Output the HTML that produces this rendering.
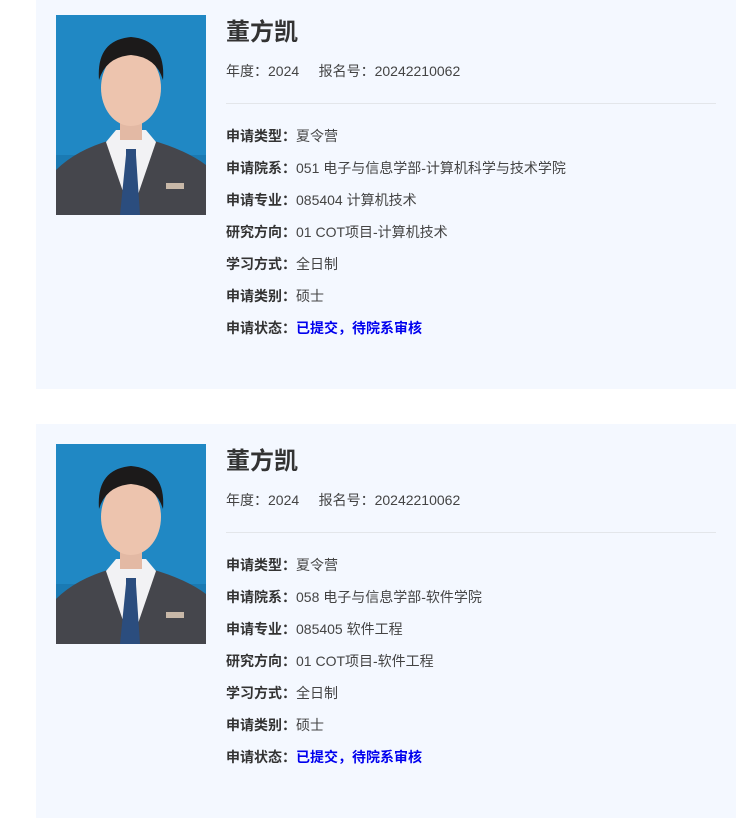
<!DOCTYPE html>
<html><head><meta charset="utf-8"><style>
*{margin:0;padding:0;box-sizing:border-box}
body{width:751px;height:818px;background:#fff;font-family:"Liberation Sans","Noto Sans CJK SC",sans-serif;color:#333;position:relative;overflow:hidden}
.card{position:absolute;left:36px;width:700px;background:#f4f8ff}
.photo{position:absolute;left:20px;top:15px;width:150px;height:200px}
.info{position:absolute;left:190px;top:1px;width:490px}
.name{position:absolute;top:17px;font-size:24px;font-weight:bold;color:#333;line-height:30px}
.meta{position:absolute;top:61px;font-size:14px;line-height:18px;color:#444}
.hr{position:absolute;top:102px;left:0;width:490px;height:1px;background:#e3e6ea}
.row{position:absolute;font-size:14px;line-height:18px;color:#444}
.row b{color:#333}
.blue{color:#0000ee;font-weight:bold}
</style></head><body>
<svg width="0" height="0" style="position:absolute"><defs>
<g id="ph">
<rect width="150" height="200" fill="#2088c4"/>
<rect y="140" width="150" height="60" fill="#1a7ab3"/>
<path d="M0 155 Q20 135 55 125 L95 125 Q130 135 150 150 L150 200 L0 200Z" fill="#45464c"/>
<path d="M50 127 L75 200 L100 127 L90 115 L60 115Z" fill="#f2f2f4"/>
<path d="M70 140 L80 140 L84 200 L64 200Z" fill="#2b4d7e"/>
<path d="M70 134 L80 134 L80 142 L70 142Z" fill="#2b4d7e"/>
<rect x="64" y="95" width="22" height="30" fill="#e3b9a4"/>
<ellipse cx="75" cy="73" rx="30" ry="38" fill="#edc4ae"/>
<path d="M43 65 Q40 25 75 22 Q110 25 107 65 Q100 42 75 40 Q50 42 43 65Z" fill="#1c1a1a"/>
<rect x="110" y="168" width="18" height="6" fill="#c8b8a8"/>
</g></defs></svg>

<div class="card" style="top:0;height:389px">
<svg class="photo" viewBox="0 0 150 200"><use href="#ph"/></svg>
<div class="info">
<div class="name">董方凯</div>
<div class="meta">年度：2024&nbsp;&nbsp;&nbsp;&nbsp;&nbsp;报名号：20242210062</div>
<div class="hr"></div>
<div class="row" style="top:126px"><b>申请类型：</b>夏令营</div>
<div class="row" style="top:158px"><b>申请院系：</b>051 电子与信息学部-计算机科学与技术学院</div>
<div class="row" style="top:190px"><b>申请专业：</b>085404 计算机技术</div>
<div class="row" style="top:222px"><b>研究方向：</b>01 COT项目-计算机技术</div>
<div class="row" style="top:254px"><b>学习方式：</b>全日制</div>
<div class="row" style="top:286px"><b>申请类别：</b>硕士</div>
<div class="row" style="top:318px"><b>申请状态：</b><span class="blue">已提交，待院系审核</span></div>
</div></div>

<div class="card" style="top:424px;height:394px">
<svg class="photo" style="top:20px" viewBox="0 0 150 200"><use href="#ph"/></svg>
<div class="info" style="top:6px">
<div class="name">董方凯</div>
<div class="meta">年度：2024&nbsp;&nbsp;&nbsp;&nbsp;&nbsp;报名号：20242210062</div>
<div class="hr"></div>
<div class="row" style="top:126px"><b>申请类型：</b>夏令营</div>
<div class="row" style="top:158px"><b>申请院系：</b>058 电子与信息学部-软件学院</div>
<div class="row" style="top:190px"><b>申请专业：</b>085405 软件工程</div>
<div class="row" style="top:222px"><b>研究方向：</b>01 COT项目-软件工程</div>
<div class="row" style="top:254px"><b>学习方式：</b>全日制</div>
<div class="row" style="top:286px"><b>申请类别：</b>硕士</div>
<div class="row" style="top:318px"><b>申请状态：</b><span class="blue">已提交，待院系审核</span></div>
</div></div>
</body></html>
